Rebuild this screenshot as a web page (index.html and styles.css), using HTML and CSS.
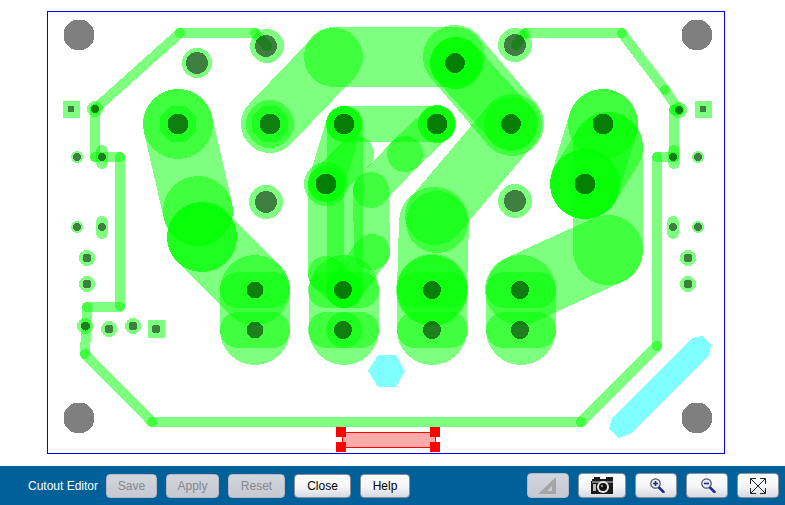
FILE: index.html
```html
<!DOCTYPE html>
<html lang="en">
<head>
    <meta charset="UTF-8">
    <title>Cutout Editor</title>
    <link rel="stylesheet" href="styles.css">
</head>
<body>
    <div class="board">
        <svg class="pcb" width="676" height="441" viewBox="48 12 676 441">
            <!-- thin traces -->
            <g class="thin">
                <line x1="95" y1="109" x2="180" y2="33"/>
                <line x1="180" y1="33" x2="255" y2="33"/>
                <line x1="255" y1="33" x2="267" y2="46"/>
                <line x1="95" y1="109" x2="95" y2="157"/>
                <line x1="95" y1="157" x2="120" y2="157"/>
                <line x1="120" y1="157" x2="120" y2="306"/>
                <line x1="120" y1="307" x2="87" y2="307"/>
                <line x1="87" y1="307" x2="85" y2="354"/>
                <line x1="85" y1="354" x2="152" y2="422"/>
                <line x1="152" y1="422" x2="581" y2="422"/>
                <line x1="581" y1="422" x2="657" y2="346"/>
                <line x1="657" y1="346" x2="657" y2="157"/>
                <line x1="657" y1="157" x2="674" y2="157"/>
                <line x1="674" y1="157" x2="674" y2="110"/>
                <line x1="674" y1="110" x2="679" y2="110"/>
                <line x1="679" y1="110" x2="665" y2="90"/>
                <line x1="665" y1="90" x2="622" y2="33"/>
                <line x1="622" y1="33" x2="525" y2="33"/>
                <line x1="525" y1="33" x2="516" y2="45"/>
            </g>

            <!-- small pads, left -->
            <g class="cu">
                <rect x="63" y="101" width="17" height="17"/>
                <circle cx="95" cy="109" r="8"/>
                <circle cx="77" cy="157" r="6"/>
                <line class="oblong" x1="102" y1="151" x2="102" y2="163"/>
                <circle cx="77" cy="227" r="6"/>
                <line class="oblong" x1="102" y1="222" x2="102" y2="233"/>
                <circle cx="87" cy="258" r="8"/>
                <circle cx="87" cy="284" r="8"/>
                <circle cx="85" cy="326" r="8"/>
                <circle cx="109" cy="329" r="8"/>
                <circle cx="133" cy="326" r="8"/>
                <rect x="148" y="320" width="17" height="18"/>
            </g>

            <!-- small pads, right -->
            <g class="cu">
                <rect x="695" y="101" width="17" height="17"/>
                <circle cx="679" cy="110" r="8"/>
                <circle cx="698" cy="157" r="6"/>
                <line class="oblong" x1="674" y1="151" x2="674" y2="163"/>
                <circle cx="698" cy="227" r="6"/>
                <line class="oblong" x1="673" y1="222" x2="673" y2="233"/>
                <circle cx="688" cy="258" r="8"/>
                <circle cx="688" cy="284" r="8"/>
            </g>

            <!-- medium pads -->
            <g class="cu">
                <circle cx="267" cy="46" r="17"/>
                <circle cx="197" cy="63" r="15"/>
                <circle cx="266" cy="202" r="17"/>
                <circle cx="515" cy="45" r="17"/>
                <circle cx="515" cy="201" r="17"/>
            </g>

            <!-- left power trace -->
            <g class="cu">
                <line class="w70" x1="178" y1="124" x2="198" y2="211"/>
                <circle cx="178" cy="124" r="35"/>
                <polygon points="170.5,106 185.5,106 196,116.5 196,131.5 185.5,142 170.5,142 160,131.5 160,116.5"/>
                <circle cx="198" cy="211" r="35"/>
                <circle cx="202" cy="237" r="35"/>
                <circle cx="202" cy="237" r="35"/>
                <line class="w70" x1="202" y1="237" x2="255" y2="290"/>
            </g>

            <!-- top wide trace -->
            <g class="cu">
                <line class="w58" x1="270" y1="124" x2="334" y2="57"/>
                <line class="w60" x1="334" y1="57" x2="455" y2="57"/>
                <circle cx="270" cy="124" r="24"/>
                <polygon points="262.5,106 277.5,106 288,116.5 288,131.5 277.5,142 262.5,142 252,131.5 252,116.5"/>
                <circle cx="456" cy="63" r="26"/>
                <circle cx="456" cy="63" r="26"/>
                <line class="w64" x1="455" y1="57" x2="512" y2="124"/>
                <line class="w52" x1="456" y1="63" x2="511" y2="124"/>
                <circle cx="511" cy="124" r="27"/>
                <line class="w60" x1="512" y1="124" x2="435" y2="215"/>
            </g>

            <!-- middle traces -->
            <g class="cu">
                <line class="w36" x1="344" y1="124" x2="437" y2="124"/>
                <line class="w36" x1="437" y1="124" x2="405" y2="154"/>
                <line class="w36" x1="405" y1="154" x2="371" y2="190"/>
                <line class="w36" x1="371" y1="190" x2="372" y2="252"/>
                <line class="w36" x1="372" y1="252" x2="344" y2="290"/>
                <line class="w36" x1="344" y1="124" x2="326" y2="184"/>
                <line class="w36" x1="326" y1="184" x2="356" y2="154"/>
                <line class="w36" x1="326" y1="184" x2="326" y2="274"/>
                <line class="w36" x1="326" y1="274" x2="344" y2="290"/>
                <line class="w36" x1="345" y1="124" x2="345" y2="290"/>
                <circle cx="344" cy="124" r="18"/>
                <circle cx="437" cy="124" r="19"/>
                <circle cx="437" cy="124" r="19"/>
                <circle cx="326" cy="184" r="22"/>
            </g>

            <!-- right power trace -->
            <g class="cu">
                <circle cx="603" cy="124" r="35"/>
                <line class="w70" x1="603" y1="124" x2="585" y2="184"/>
                <line class="w70" x1="608" y1="147" x2="585" y2="184"/>
                <circle cx="585" cy="184" r="35"/>
                <circle cx="585" cy="184" r="35"/>
                <line class="w70" x1="608" y1="147" x2="608" y2="250"/>
                <line class="w70" x1="608" y1="250" x2="520" y2="290"/>
            </g>

            <!-- connector columns -->
            <g class="cu">
                <line class="w70" x1="255" y1="290" x2="255" y2="330"/>
                <line class="w36" x1="238" y1="290" x2="272" y2="290"/>
                <line class="w36" x1="238" y1="330" x2="272" y2="330"/>

                <line class="w70" x1="344" y1="290" x2="344" y2="330"/>
                <line class="w36" x1="326" y1="290" x2="361" y2="290"/>
                <line class="w36" x1="326" y1="330" x2="361" y2="330"/>
                <circle cx="344" cy="290" r="18"/>
                <circle cx="344" cy="330" r="18"/>

                <line class="w70" x1="432" y1="290" x2="432" y2="330"/>
                <line class="w70" x1="434" y1="222" x2="432" y2="290"/>
                <circle cx="437" cy="222" r="31"/>
                <circle cx="432" cy="290" r="36"/>
                <line class="w36" x1="415" y1="290" x2="450" y2="290"/>
                <line class="w36" x1="415" y1="330" x2="450" y2="330"/>

                <line class="w70" x1="521" y1="290" x2="521" y2="330"/>
                <line class="w36" x1="504" y1="290" x2="538" y2="290"/>
                <line class="w36" x1="504" y1="330" x2="538" y2="330"/>
            </g>

            <!-- drill holes -->
            <g class="hole">
                <circle cx="79" cy="35" r="15.5"/>
                <circle cx="697" cy="35" r="15.5"/>
                <circle cx="79" cy="418" r="15.5"/>
                <circle cx="697" cy="418" r="15.5"/>

                <circle cx="71" cy="109" r="3.5"/>
                <circle cx="95" cy="109" r="4"/>
                <circle cx="77" cy="157" r="4"/>
                <circle cx="102" cy="157" r="4"/>
                <circle cx="77" cy="227" r="4"/>
                <circle cx="102" cy="227" r="4"/>
                <circle cx="87" cy="258" r="4.5"/>
                <circle cx="87" cy="284" r="4.5"/>
                <circle cx="85.5" cy="326" r="4.5"/>
                <circle cx="109" cy="329" r="4.5"/>
                <circle cx="133" cy="326" r="4.5"/>
                <circle cx="156" cy="329" r="4.5"/>

                <circle cx="703" cy="109" r="3.5"/>
                <circle cx="679" cy="110" r="4"/>
                <circle cx="698" cy="157" r="4"/>
                <circle cx="673" cy="157" r="4"/>
                <circle cx="698" cy="227" r="4"/>
                <circle cx="673" cy="227" r="4"/>
                <circle cx="688" cy="258" r="4.5"/>
                <circle cx="688" cy="284" r="4.5"/>

                <circle cx="266" cy="46" r="11"/>
                <circle cx="197" cy="63" r="11"/>
                <circle cx="266" cy="202" r="11"/>
                <circle cx="515" cy="45" r="11"/>
                <circle cx="515" cy="201" r="11"/>

                <circle cx="178" cy="124" r="10.5"/>
                <circle cx="270" cy="124" r="10.5"/>
                <circle cx="344" cy="124" r="10.5"/>
                <circle cx="437" cy="124" r="10.5"/>
                <circle cx="455" cy="63" r="10"/>
                <circle cx="511" cy="124" r="10"/>
                <circle cx="603" cy="124" r="10.5"/>
                <circle cx="326" cy="184" r="10.5"/>
                <circle cx="585" cy="184" r="10.5"/>

                <circle cx="255" cy="290" r="8.5"/>
                <circle cx="255" cy="330" r="8.5"/>
                <circle cx="343" cy="290" r="9"/>
                <circle cx="343" cy="330" r="9"/>
                <circle cx="432" cy="290" r="9"/>
                <circle cx="432" cy="330" r="9"/>
                <circle cx="520" cy="290" r="9"/>
                <circle cx="520" cy="330" r="9"/>
            </g>

            <!-- keepouts -->
            <polygon class="keepout" points="378,355 396,355 405,371 396,387 378,387 368,371"/>
            <polygon class="keepout" points="693,338 702,336 711,345 709,356 630,434 618,438 609,429 612,418"/>

            <!-- cutout being edited -->
            <rect class="cutout" x="342.5" y="432.5" width="93" height="15"/>
            <rect class="handle" x="336" y="427" width="10" height="10"/>
            <rect class="handle" x="430" y="427" width="10" height="10"/>
            <rect class="handle" x="336" y="442" width="10" height="10"/>
            <rect class="handle" x="430" y="442" width="10" height="10"/>
        </svg>
    </div>

    <div class="toolbar">
        <span class="title">Cutout Editor</span>
        <button class="btn btn-save" disabled>Save</button>
        <button class="btn btn-apply" disabled>Apply</button>
        <button class="btn btn-reset" disabled>Reset</button>
        <button class="btn btn-close">Close</button>
        <button class="btn btn-help">Help</button>

        <div class="tools">
            <button class="btn tool tool-ruler" disabled>
                <svg width="20" height="17" viewBox="0 0 20 17">
                    <path fill="#a3a5a8" fill-rule="evenodd" d="M18 0V17H0ZM14 9 9 14H14Z"/>
                </svg>
            </button>
            <button class="btn tool tool-camera">
                <svg width="23" height="17" viewBox="0 0 23 17">
                    <path fill="#1a1a1a" d="M1 2H3V0H9V2H15V0H22V17H0V4H1Z"/>
                    <rect x="1" y="4" width="21" height="2" fill="#777"/>
                    <rect x="2" y="7" width="3" height="7" fill="#bbb"/>
                    <circle cx="12" cy="10" r="6" fill="#e6e6e6"/>
                    <circle cx="12" cy="10" r="4" fill="#111"/>
                    <circle cx="11" cy="9" r="1.2" fill="#888"/>
                </svg>
            </button>
            <button class="btn tool tool-zoom">
                <svg class="lens" width="15" height="15" viewBox="0 0 15 15">
                    <line x1="9" y1="9.5" x2="13.5" y2="14" stroke="#1c2d8c" stroke-width="2.5" stroke-linecap="round"/>
                    <circle cx="5.5" cy="5.5" r="4.7" fill="#e6ebf4" stroke="#4a4f66" stroke-width="1.2"/>
                    <path d="M3 5.5H8M5.5 3V8" stroke="#1c2d8c" stroke-width="1.6"/>
                </svg>
            </button>
            <button class="btn tool tool-zoom">
                <svg class="lens" width="15" height="15" viewBox="0 0 15 15">
                    <line x1="9" y1="9.5" x2="13.5" y2="14" stroke="#1c2d8c" stroke-width="2.5" stroke-linecap="round"/>
                    <circle cx="5.5" cy="5.5" r="4.7" fill="#e6ebf4" stroke="#4a4f66" stroke-width="1.2"/>
                    <path d="M3 5.5H8" stroke="#1c2d8c" stroke-width="1.6"/>
                </svg>
            </button>
            <button class="btn tool tool-fit">
                <svg width="16" height="16" viewBox="0 0 16 16" fill="none" stroke="#222" stroke-width="1">
                    <path d="M1 1 15 15M15 1 1 15"/>
                    <path d="M.5 6V.5H6M10 .5H15.5V6M15.5 10V15.5H10M6 15.5H.5V10"/>
                </svg>
            </button>
        </div>
    </div>
</body>
</html>
```

FILE: styles.css
```css
body {
    margin: 0;
    background-color: #ffffff;
    font-family: "Liberation Sans", Arial, sans-serif;
    overflow: hidden;
}
.board {
    box-sizing: border-box;
    width: 678px;
    height: 443px;
    margin: 11px 0 0 47px;
    border: 1px solid #0000ff;
}
.pcb {
    display: block;
    shape-rendering: crispEdges;
}
.thin line {
    stroke: #00ff00;
    stroke-opacity: 0.5;
    stroke-width: 10;
    stroke-linecap: round;
}
.cu circle, .cu rect, .cu polygon {
    fill: #00ff00;
    fill-opacity: 0.5;
}
.cu line {
    stroke: #00ff00;
    stroke-opacity: 0.5;
    stroke-linecap: round;
}
.cu .oblong { stroke-width: 12; }
.cu .w36 { stroke-width: 36; }
.cu .w52 { stroke-width: 52; }
.cu .w58 { stroke-width: 58; }
.cu .w60 { stroke-width: 60; }
.cu .w64 { stroke-width: 64; }
.cu .w70 { stroke-width: 70; }
.hole circle {
    fill: #000000;
    fill-opacity: 0.5;
}
.keepout {
    fill: #80ffff;
}
.cutout {
    fill: #ffaaaa;
    stroke: #ff0000;
    stroke-width: 1;
}
.handle {
    fill: #ff0000;
}
.toolbar {
    display: flex;
    align-items: center;
    height: 39px;
    margin-top: 12px;
    padding: 0 6px 0 28px;
    background-color: #00609a;
}
.title {
    width: 78px;
    color: #ffffff;
    font-size: 12px;
    white-space: nowrap;
}
.btn {
    box-sizing: border-box;
    height: 24px;
    margin-right: 9px;
    padding: 0;
    border: 1px solid #8a8f99;
    border-radius: 4px;
    background: linear-gradient(#ffffff, #f4f5f8 55%, #d6d9e2);
    color: #000000;
    font-family: "Liberation Sans", Arial, sans-serif;
    font-size: 12px;
}
.btn:disabled {
    border-color: #b4b8c2;
    background: linear-gradient(#d2d5dc, #c6c9d2);
    color: #85888e;
}
.btn-save { width: 51px; }
.btn-apply { width: 53px; }
.btn-reset { width: 57px; }
.btn-close { width: 57px; }
.btn-help { width: 50px; margin-right: 0; }
.tools {
    display: flex;
    margin-left: auto;
}
.tool {
    display: flex;
    align-items: center;
    justify-content: center;
    height: 25px;
    width: 42px;
}
.tool:last-child { margin-right: 0; }
.tool-camera { width: 48px; }
.lens { margin-left: 3px; }
```
